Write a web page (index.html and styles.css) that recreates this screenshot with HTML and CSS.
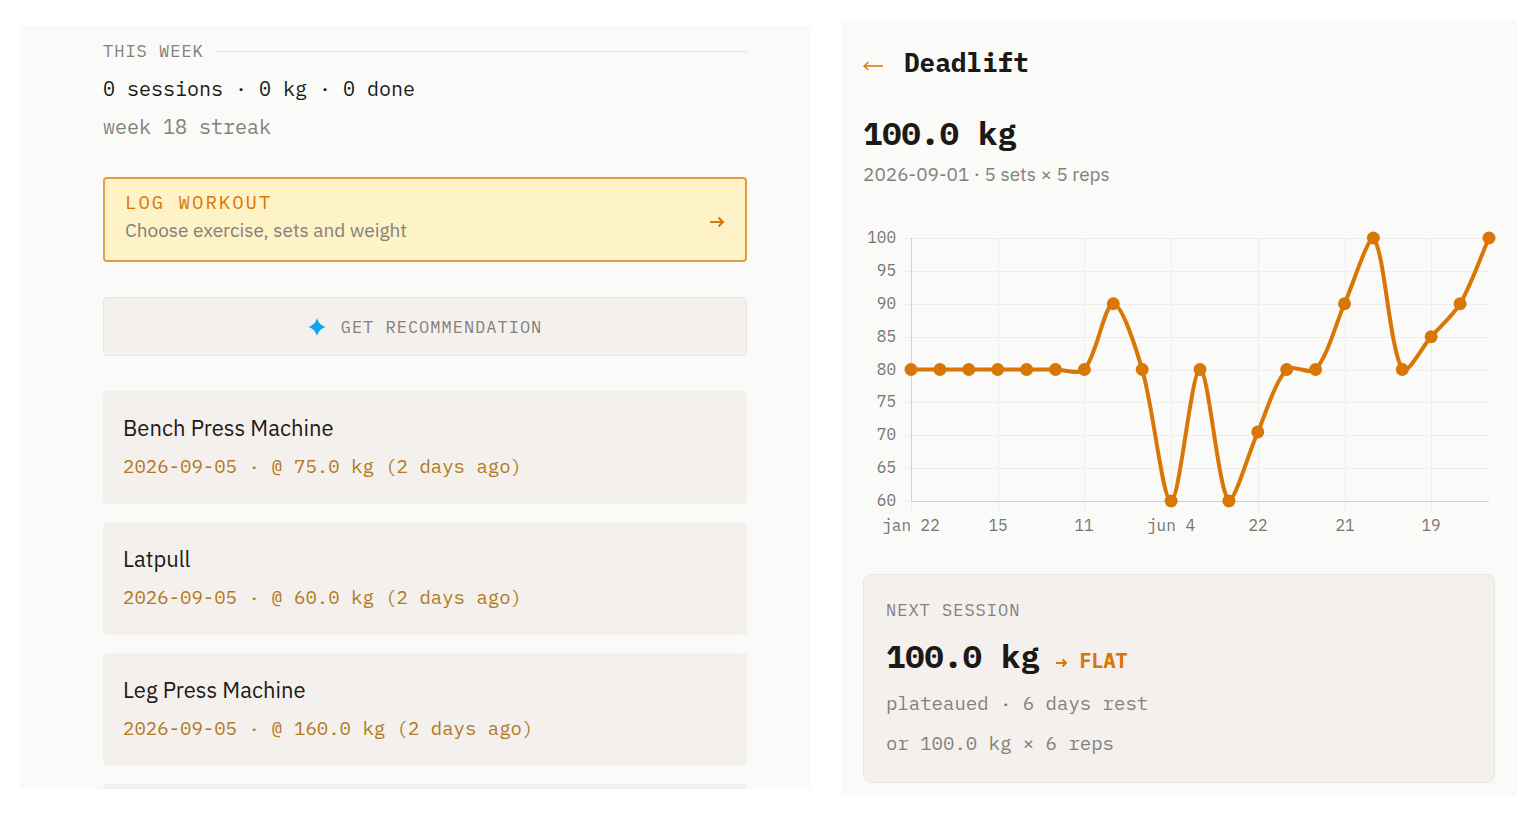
FILE: index.html
```html
<!DOCTYPE html>
<html lang="en">
<head>
  <meta charset="UTF-8">
  <meta name="viewport" content="width=device-width, initial-scale=1.0">
  <title>Workout Log</title>
  <link rel="stylesheet" href="styles.css">
</head>
<body>
  <main class="screens">
    <section class="panel home">
      <h2 class="section-label">THIS WEEK</h2>
      <p class="stats">0 sessions · 0 kg · 0 done</p>
      <p class="streak">week 18 streak</p>

      <button class="log-btn" type="button">
        <span class="log-text">
          <span class="log-title">LOG WORKOUT</span>
          <span class="log-sub">Choose exercise, sets and weight</span>
        </span>
        <svg class="log-arrow" viewBox="0 0 16 12" aria-hidden="true">
          <path d="M1 6H14M9.5 1.5L14 6L9.5 10.5"/>
        </svg>
      </button>

      <button class="recommend-btn" type="button">
        <svg class="sparkle" viewBox="0 0 18 18" aria-hidden="true">
          <path d="M9 0C10.5 5 13 7.5 18 9C13 10.5 10.5 13 9 18C7.5 13 5 10.5 0 9C5 7.5 7.5 5 9 0Z"/>
        </svg>
        <span>GET RECOMMENDATION</span>
      </button>

      <ul class="exercise-list">
        <li class="exercise">
          <h3>Bench Press Machine</h3>
          <p>2026-09-05 · @ 75.0 kg (2 days ago)</p>
        </li>
        <li class="exercise">
          <h3>Latpull</h3>
          <p>2026-09-05 · @ 60.0 kg (2 days ago)</p>
        </li>
        <li class="exercise">
          <h3>Leg Press Machine</h3>
          <p>2026-09-05 · @ 160.0 kg (2 days ago)</p>
        </li>
        <li class="exercise"></li>
      </ul>
    </section>

    <section class="panel detail">
      <header class="detail-header">
        <a class="back" href="#" aria-label="Back">
          <svg viewBox="0 0 20 12" aria-hidden="true">
            <path d="M20 6H1.5M5.5 2L1 6L5.5 10"/>
          </svg>
        </a>
        <h1>Deadlift</h1>
      </header>
      <p class="weight">100.0 kg</p>
      <p class="summary">2026-09-01 · 5 sets × 5 reps</p>

      <svg class="chart" id="chart" role="img" aria-label="Deadlift weight history"></svg>

      <div class="next">
        <h2 class="next-label">NEXT SESSION</h2>
        <div class="next-row">
          <span class="weight">100.0 kg</span>
          <span class="trend">
            <svg viewBox="0 0 12 10" aria-hidden="true">
              <path d="M0 5H10M6.5 1.5L10 5L6.5 8.5"/>
            </svg>
            FLAT
          </span>
        </div>
        <p>plateaued · 6 days rest</p>
        <p>or 100.0 kg × 6 reps</p>
      </div>
    </section>
  </main>

  <script>
    const chart = document.getElementById('chart');
    const weights = [80, 80, 80, 80, 80, 80, 80, 90, 80, 60, 80, 60, 70.5, 80, 80, 90, 100, 80, 85, 90, 100];
    const labels = { 0: 'jan 22', 3: '15', 6: '11', 9: 'jun 4', 12: '22', 15: '21', 18: '19' };
    const min = 60;
    const max = 100;
    const tension = 0.3;
    const area = { top: 20, bottom: 283, left: 48 };

    function add(name, attrs, text) {
      const el = document.createElementNS('http://www.w3.org/2000/svg', name);
      for (const key in attrs) el.setAttribute(key, attrs[key]);
      if (text) el.textContent = text;
      chart.appendChild(el);
    }

    function addLine(cls, x1, y1, x2, y2) {
      add('line', { class: cls, x1, y1, x2, y2 });
    }

    function clamp(y) {
      return Math.min(area.bottom, Math.max(area.top, y));
    }

    // Control points on both sides of a point
    function controls(prev, cur, next) {
      const d1 = Math.hypot(cur.x - prev.x, cur.y - prev.y);
      const d2 = Math.hypot(next.x - cur.x, next.y - cur.y);
      const a = tension * d1 / (d1 + d2);
      const b = tension * d2 / (d1 + d2);
      return {
        before: { x: cur.x - a * (next.x - prev.x), y: clamp(cur.y - a * (next.y - prev.y)) },
        after: { x: cur.x + b * (next.x - prev.x), y: clamp(cur.y + b * (next.y - prev.y)) }
      };
    }

    function draw() {
      chart.innerHTML = '';
      const right = chart.clientWidth - 6;
      const yAt = v => area.bottom - (v - min) / (max - min) * (area.bottom - area.top);
      const xAt = i => area.left + i * (right - area.left) / (weights.length - 1);

      for (let v = min; v <= max; v += 5) {
        const y = Math.round(yAt(v));
        addLine('grid', area.left - 9, y, right, y);
        add('text', { class: 'y-label', x: area.left - 15, y: y + 5 }, String(v));
      }
      for (const i in labels) {
        const x = Math.round(xAt(i));
        addLine('grid', x, area.top, x, area.bottom + 11);
        add('text', { class: 'x-label', x, y: area.bottom + 30 }, labels[i]);
      }
      addLine('axis', area.left, area.top, area.left, area.bottom);
      addLine('axis', area.left, area.bottom, right, area.bottom);

      const points = weights.map((v, i) => ({ x: xAt(i), y: yAt(v) }));
      const ctrl = points.map((p, i) => controls(points[i - 1] || p, p, points[i + 1] || p));
      let d = `M${points[0].x} ${points[0].y}`;
      for (let i = 1; i < points.length; i++) {
        const a = ctrl[i - 1].after;
        const b = ctrl[i].before;
        d += `C${a.x} ${a.y} ${b.x} ${b.y} ${points[i].x} ${points[i].y}`;
      }
      add('path', { class: 'curve', d });
      points.forEach(p => add('circle', { class: 'dot', cx: p.x, cy: p.y, r: 6.5 }));
    }

    window.addEventListener('resize', draw);
    draw();
  </script>
</body>
</html>
```

FILE: styles.css
```css
:root {
  --mono: "IBM Plex Mono", "Liberation Mono", monospace;
  --sans: "IBM Plex Sans", Roboto, sans-serif;
  --accent: #d97706;
  --ink: #1c1917;
  --muted: #85807a;
  --card: #f4f0ed;
  --line: #e9e7e3;
}

* {
  box-sizing: border-box;
}

body {
  margin: 0;
  background: #fff;
  color: var(--ink);
  font-family: var(--mono);
}

h1, h2, h3, p, ul {
  margin: 0;
  padding: 0;
  font-weight: normal;
}

button {
  font: inherit;
  cursor: pointer;
}

svg path {
  fill: none;
  stroke: currentColor;
}

.screens {
  display: grid;
  grid-template-columns: 791fr 675fr;
  align-items: start;
  gap: 31px;
  padding: 20px;
}

.panel {
  background: #fafaf8;
  min-width: 0;
}

/* Home */
.home {
  height: calc(100vh - 53px);
  min-height: 400px;
  margin-top: 6px;
  padding: 12px 64px 0 83px;
  overflow: hidden;
}

.section-label {
  display: flex;
  align-items: center;
  gap: 12px;
  font-size: 17px;
  line-height: 26px;
  letter-spacing: 1px;
  color: var(--muted);
}

.section-label::after {
  content: "";
  flex: 1;
  height: 1px;
  background: #e5e4df;
}

.stats,
.streak {
  font-size: 20px;
  line-height: 38px;
}

.stats {
  margin-top: 6px;
}

.streak {
  color: var(--muted);
}

.log-btn {
  display: flex;
  align-items: center;
  justify-content: space-between;
  width: 100%;
  height: 85px;
  margin-top: 31px;
  padding: 0 20px;
  background: #fef2c7;
  border: 2px solid #e49c42;
  border-radius: 4px;
  color: var(--accent);
  text-align: left;
}

.log-text {
  display: flex;
  flex-direction: column;
  padding-bottom: 7px;
  line-height: 28px;
}

.log-title {
  font-size: 19px;
  letter-spacing: 2px;
}

.log-sub {
  font-family: var(--sans);
  font-size: 19px;
  color: var(--muted);
}

.log-arrow {
  width: 16px;
  height: 12px;
  margin-top: 4px;
  stroke-width: 2;
}

.recommend-btn {
  display: flex;
  align-items: center;
  justify-content: center;
  gap: 15px;
  width: 100%;
  height: 59px;
  margin: 35px 0;
  background: var(--card);
  border: 1px solid var(--line);
  border-radius: 4px;
  color: var(--muted);
  font-size: 17px;
  letter-spacing: 1px;
}

.sparkle {
  width: 18px;
  height: 18px;
}

.sparkle path {
  fill: #0ea5e9;
  stroke: none;
}

.exercise-list {
  display: flex;
  flex-direction: column;
  gap: 18px;
  list-style: none;
}

.exercise {
  min-height: 113px;
  padding: 18px 20px;
  background: var(--card);
  border-radius: 4px;
  line-height: 38px;
}

.exercise h3 {
  font-family: var(--sans);
  font-size: 22px;
}

.exercise p {
  font-size: 19px;
  color: #b27a22;
}

/* Exercise detail */
.detail {
  padding: 22px 22px 13px 21px;
}

.detail-header {
  display: flex;
  align-items: center;
  gap: 21px;
}

.detail-header h1 {
  font-size: 26px;
  font-weight: bold;
  line-height: 40px;
}

.back {
  display: flex;
  padding-top: 8px;
  color: var(--accent);
}

.back svg {
  width: 20px;
  height: 12px;
  stroke-width: 1.4;
}

.weight {
  font-size: 32px;
  font-weight: bold;
  line-height: 40px;
}

.detail-header + .weight {
  margin-top: 31px;
}

.summary {
  margin-top: 7px;
  font-family: var(--sans);
  font-size: 19px;
  line-height: 28px;
  color: var(--muted);
}

.chart {
  display: block;
  width: 100%;
  height: 320px;
  margin: 30px 0 36px;
  overflow: visible;
}

.chart text {
  font-size: 16px;
  fill: #78736e;
}

.y-label {
  text-anchor: end;
}

.x-label {
  text-anchor: middle;
}

.grid {
  stroke: #efedeb;
  shape-rendering: crispEdges;
}

.axis {
  stroke: #d3d1ce;
  shape-rendering: crispEdges;
}

.chart .curve {
  stroke: var(--accent);
  stroke-width: 4;
}

.dot {
  fill: var(--accent);
}

.next {
  padding: 21px 22px 19px;
  background: var(--card);
  border: 1px solid var(--line);
  border-radius: 8px;
  color: var(--muted);
}

.next-label {
  font-size: 17px;
  line-height: 28px;
  letter-spacing: 1px;
}

.next-row {
  display: flex;
  align-items: baseline;
  gap: 16px;
  margin: 12px 0 7px;
  color: var(--ink);
}

.trend {
  font-size: 20px;
  font-weight: bold;
  color: var(--accent);
}

.trend svg {
  width: 12px;
  height: 10px;
  stroke-width: 2;
}

.next p {
  font-size: 19px;
  line-height: 40px;
}
```
